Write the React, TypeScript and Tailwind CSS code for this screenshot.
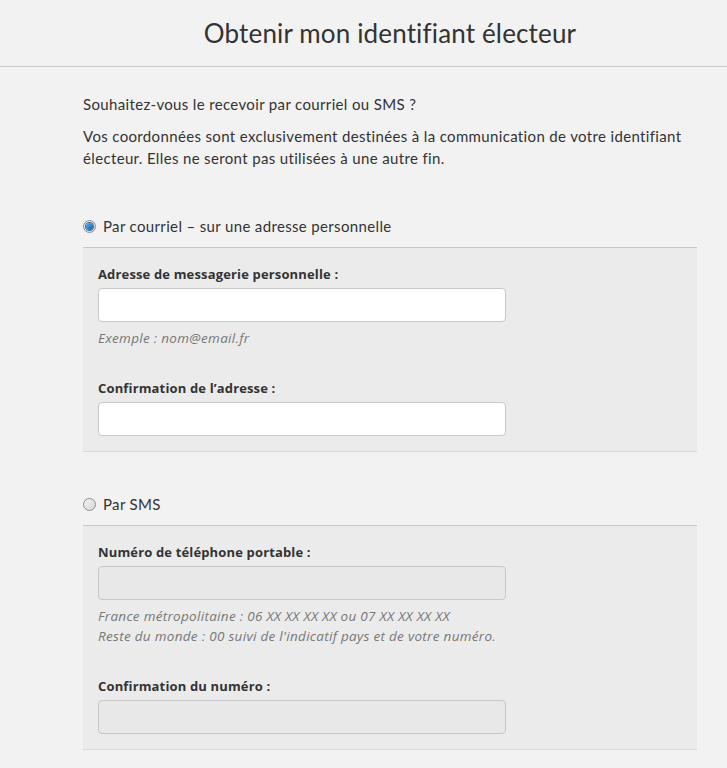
const font = { fontFamily: "Lato, 'Open Sans', sans-serif" };
const smallFont = { fontFamily: "'Open Sans', Lato, sans-serif" };

function Radio({ checked }: { checked?: boolean }) {
  return (
    <span className="relative inline-flex h-[13px] w-[13px] shrink-0 items-center justify-center rounded-full border border-[#8f8f8f] bg-gradient-to-br from-[#f4f4f4] to-[#d6d6d6]">
      {checked && (
        <span className="h-[7px] w-[7px] rounded-full bg-gradient-to-br from-[#5fb8f0] to-[#12569a] shadow-[0_0_0_1px_#2d6ea5]" />
      )}
    </span>
  );
}

function Field({
  label,
  help,
  disabled,
  className = "",
}: {
  label: string;
  help?: string[];
  disabled?: boolean;
  className?: string;
}) {
  return (
    <div className={className} style={smallFont}>
      <label className="mb-1 block text-[13px] font-bold leading-5 tracking-[0.15px] text-[#333]">
        {label}
      </label>
      <input
        type="text"
        disabled={disabled}
        className={`block h-[34px] w-[408px] rounded-[4px] border border-[#c8c8c8] px-2 outline-none ${
          disabled ? "bg-[#e8e8e8]" : "bg-white"
        }`}
      />
      {help && (
        <div className="mt-1.5 text-[13.5px] italic leading-5 tracking-[0.3px] text-[#777]">
          {help.map((h) => (
            <p key={h}>{h}</p>
          ))}
        </div>
      )}
    </div>
  );
}

export default function App() {
  return (
    <div className="min-h-[768px] bg-[#f2f2f2] text-[#333]" style={font}>
      <header className="h-[67px] border-b border-[#c8c8c8]">
        <div className="ml-[83px] w-[614px] pt-[14px] text-center">
          <h1 className="text-[26px] font-normal leading-[38px] tracking-[0.15px] text-[#333]">
            Obtenir mon identifiant électeur
          </h1>
        </div>
      </header>

      <main className="ml-[83px] w-[614px] pt-[26px] pb-10 text-[15px] leading-[22px] tracking-[0.35px]">
        <p>Souhaitez-vous le recevoir par courriel ou SMS ?</p>
        <p className="mt-2.5">
          Vos coordonnées sont exclusivement destinées à la communication de votre identifiant
          électeur. Elles ne seront pas utilisées à une autre fin.
        </p>

        <label className="mt-[46px] flex items-center gap-[7px]">
          <Radio checked />
          <span>Par courriel – sur une adresse personnelle</span>
        </label>
        <section className="mt-2.5 border-t border-b border-t-[#c8c8c8] border-b-[#d9d9d9] bg-[#ebebeb] px-[15px] pt-4 pb-[15px] tracking-normal">
          <Field label="Adresse de messagerie personnelle :" help={["Exemple : nom@email.fr"]} />
          <Field className="mt-[30px]" label="Confirmation de l’adresse :" />
        </section>

        <label className="mt-[41px] flex items-center gap-[7px]">
          <Radio />
          <span>Par SMS</span>
        </label>
        <section className="mt-2.5 border-t border-b border-t-[#c8c8c8] border-b-[#d9d9d9] bg-[#ebebeb] px-[15px] pt-4 pb-[15px] tracking-normal">
          <Field
            disabled
            label="Numéro de téléphone portable :"
            help={[
              "France métropolitaine : 06 XX XX XX XX ou 07 XX XX XX XX",
              "Reste du monde : 00 suivi de l'indicatif pays et de votre numéro.",
            ]}
          />
          <Field disabled className="mt-[30px]" label="Confirmation du numéro :" />
        </section>
      </main>
    </div>
  );
}
